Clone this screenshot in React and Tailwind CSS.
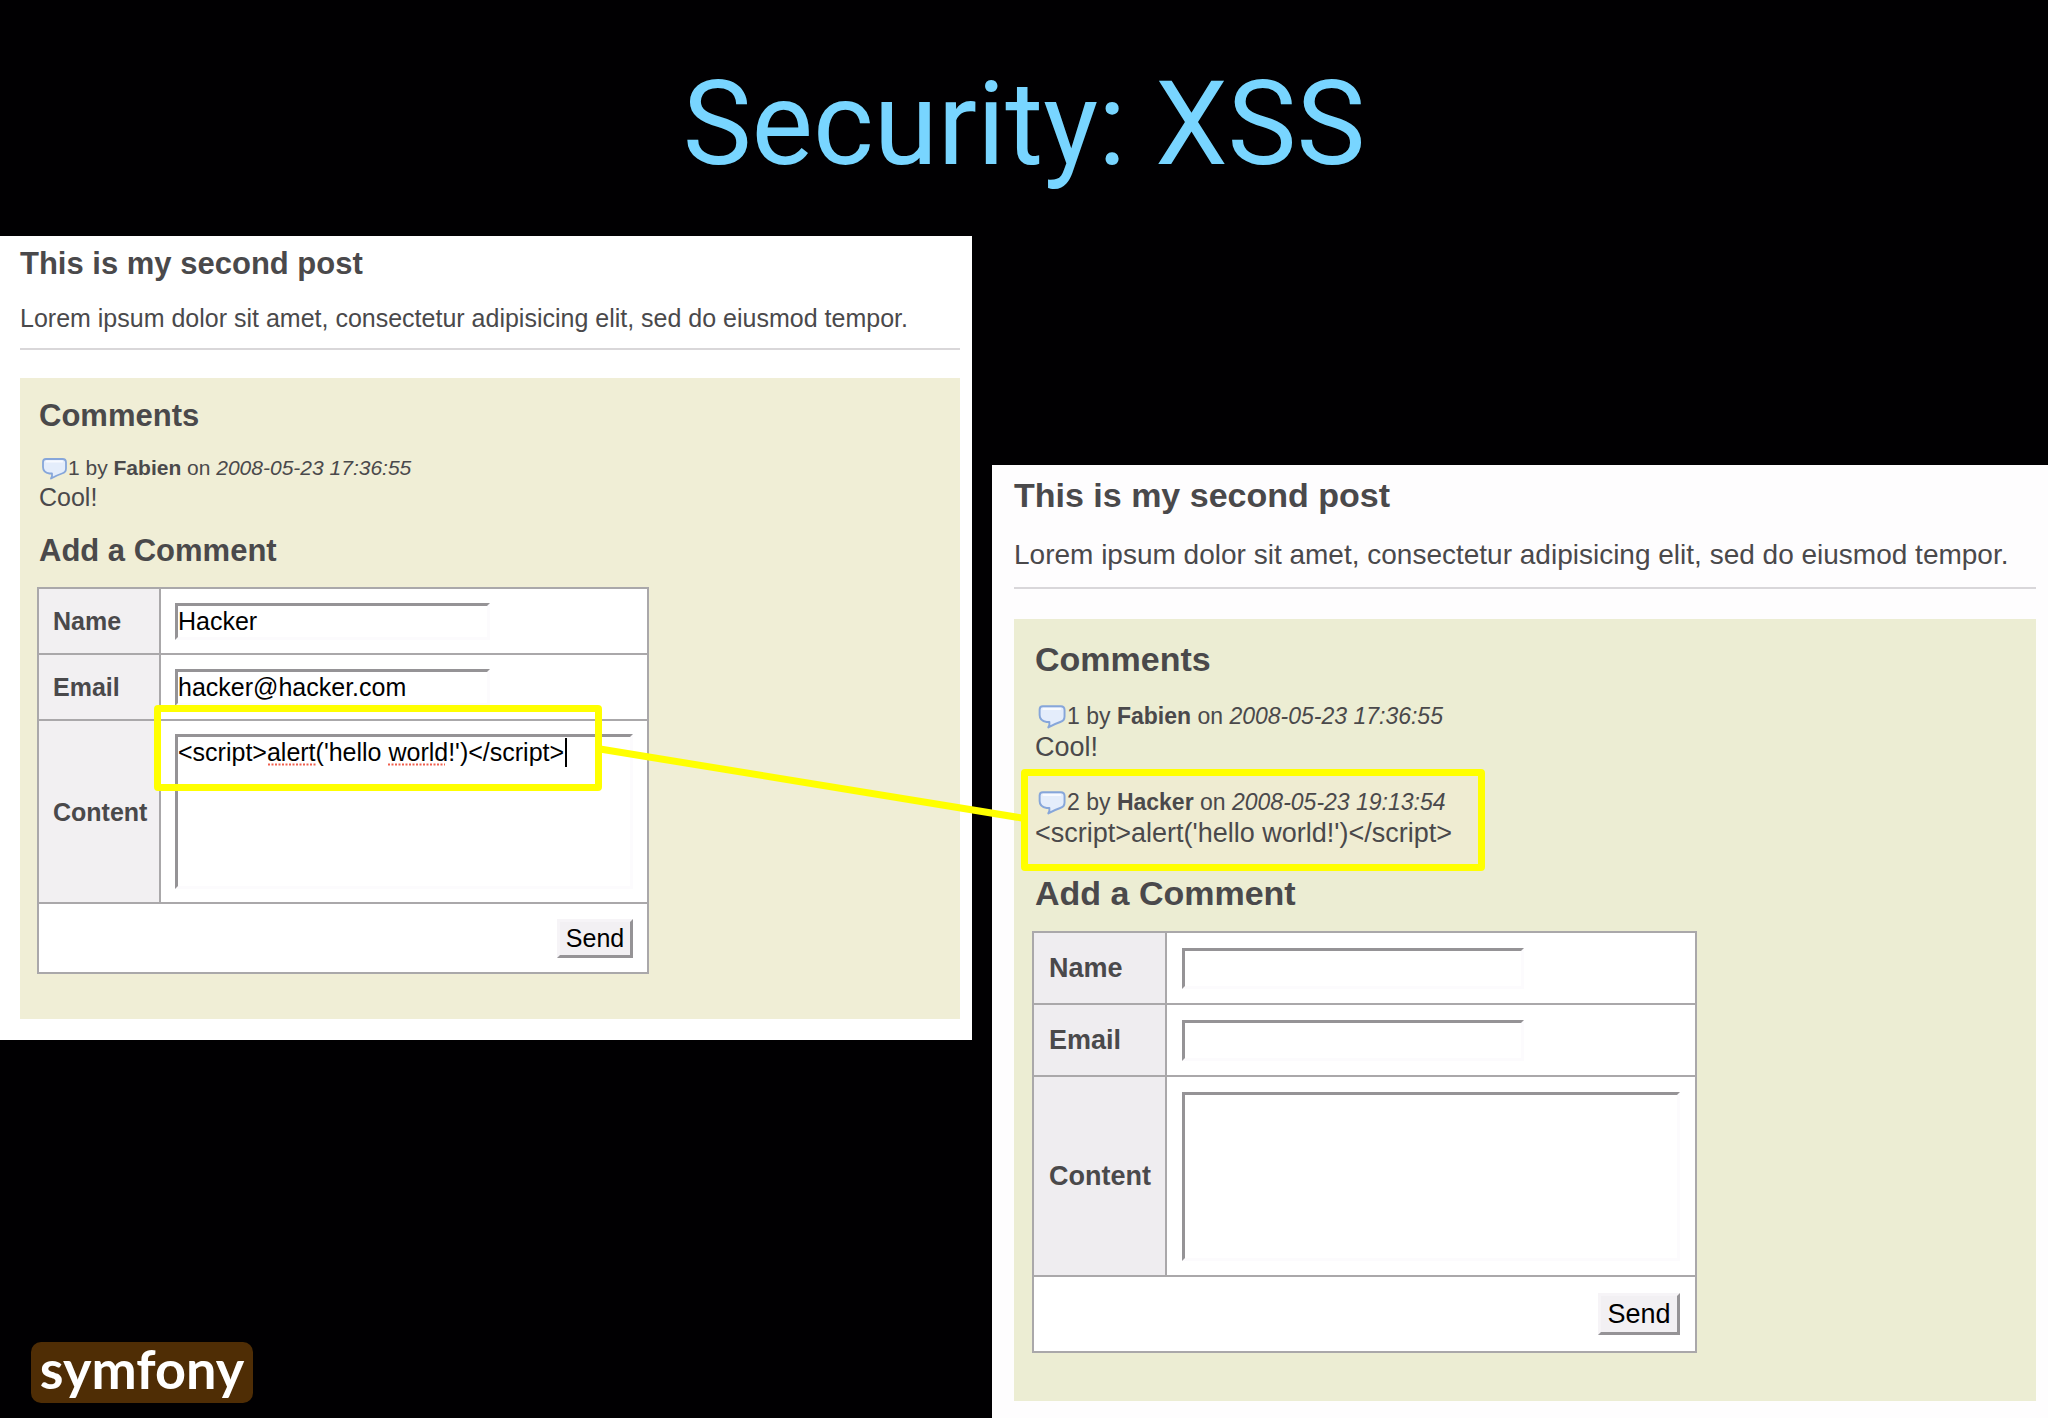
import { useId } from "react";

const SCRIPT = "<script>alert('hello world!')</script>";

const compact = {
  panel: "bg-white pl-5 pr-3 pt-2.5 pb-[21px]",
  heading: "text-[31px] leading-9 font-bold",
  intro: "mt-[21px] border-b-2 border-[#d9d7d9] pb-[15px] text-[25px] leading-[30px]",
  box: "mt-7 bg-[#f0eed6] pl-[19px] pr-4 pt-5 pb-[45px]",
  first: "mt-5",
  next: "mt-6",
  meta: "text-[21px] leading-7",
  icon: "h-6 w-[29px]",
  body: "text-[25px] leading-[30px]",
  add: "mt-[21px]",
  table: "-ml-0.5 mt-[18px] text-[25px] leading-[30px]",
  row: "h-[66px]",
  tallRow: "h-[183px]",
  lastRow: "h-[70px]",
  th: "w-[122px] bg-[#f2f0f2] pl-3.5",
  td: "w-[488px] px-3.5",
  input: "h-[37px] w-[315px]",
  area: "h-[155px] w-[458px]",
  button: "h-[39px] w-[76px]",
};

const large = {
  panel: "bg-[#fefdfe] pl-[22px] pr-3 pt-2.5 pb-4",
  heading: "text-[34px] leading-10 font-bold",
  intro: "mt-6 border-b-2 border-[#d9d7da] pb-4 text-[28px] leading-8",
  box: "mt-[30px] bg-[#ecedd3] pl-[21px] pr-4 pt-5 pb-12",
  first: "mt-[22px]",
  next: "mt-6",
  meta: "text-[23px] leading-[30px]",
  icon: "h-[26px] w-8",
  body: "text-[27px] leading-8",
  add: "mt-6",
  table: "-ml-[3px] mt-[18px] text-[27px] leading-[30px]",
  row: "h-[72px]",
  tallRow: "h-[200px]",
  lastRow: "h-[76px]",
  th: "w-[133px] bg-[#efedf0] pl-[15px]",
  td: "w-[530px] px-[15px]",
  input: "h-[41px] w-[342px]",
  area: "h-[169px] w-[498px]",
  button: "h-[42px] w-[82px]",
};

const field =
  "block rounded-none border-[3px] border-t-[#959396] border-l-[#959396] border-r-[#fcfbfd] border-b-[#fcfbfd] bg-white p-0 text-black outline-none";

function Bubble({ className }) {
  return (
    <svg className={className} viewBox="0 0 29 24" fill="none" aria-hidden="true">
      <path
        d="M7 3H23.5Q27 3 27 6.500V12.500Q27 16.500 23 17.500C20 18.500 16.500 20 12 22.500Q13.500 20 13 17.500H10.500Q4 16.500 4 11V6Q4 3 7 3Z"
        fill="#e4edfb"
        stroke="#86a6da"
        strokeWidth="1.800"
        strokeLinejoin="round"
      />
      <path d="M7.500 5.500H23" stroke="#f7faff" strokeWidth="2" strokeLinecap="round" />
    </svg>
  );
}

function Comment({ s, className, number, author, date, text, highlighted }) {
  return (
    <li className={`relative isolate ${className}`}>
      {highlighted && (
        <span className="absolute -left-3.5 -top-[18px] -z-10 h-[102px] w-[464px] rounded-sm border-[7px] border-[#ffff00] bg-[#efecd2]" />
      )}
      <p className={`flex items-center whitespace-pre ${s.meta}`}>
        <Bubble className={s.icon} />
        <span>
          {number} by <strong>{author}</strong> on <em>{date}</em>
        </span>
      </p>
      <p className={s.body}>{text}</p>
    </li>
  );
}

function TypingMarks() {
  return (
    <>
      <svg className="pointer-events-none absolute left-0 top-0 h-10 w-[458px]" fill="none" aria-hidden="true">
        <path d="M93 30.500H142M213 30.500H270" stroke="#f0604f" strokeWidth="2" strokeDasharray="2 1.500" />
        <path d="M391 4V33" stroke="#000" strokeWidth="2" />
      </svg>
      <span className="pointer-events-none absolute -left-[21px] -top-[29px] h-[86px] w-[448px] rounded-sm border-[7px] border-[#ffff00]" />
    </>
  );
}

function CommentForm({ s, values }) {
  const id = useId();
  const th = `border-2 border-[#aaa8aa] text-left align-middle font-bold ${s.th}`;
  const td = `border-2 border-[#aaa8aa] bg-white align-middle ${s.td}`;
  return (
    <form onSubmit={(e) => e.preventDefault()}>
      <table className={`border-collapse ${s.table}`}>
        <tbody>
          <tr className={s.row}>
            <th scope="row" className={th}>
              <label htmlFor={`${id}name`}>Name</label>
            </th>
            <td className={td}>
              <input id={`${id}name`} type="text" defaultValue={values.name} className={`${field} ${s.input}`} />
            </td>
          </tr>
          <tr className={s.row}>
            <th scope="row" className={th}>
              <label htmlFor={`${id}email`}>Email</label>
            </th>
            <td className={td}>
              <input id={`${id}email`} type="text" defaultValue={values.email} className={`${field} ${s.input}`} />
            </td>
          </tr>
          <tr className={s.tallRow}>
            <th scope="row" className={th}>
              <label htmlFor={`${id}content`}>Content</label>
            </th>
            <td className={td}>
              <div className="relative">
                <textarea
                  id={`${id}content`}
                  defaultValue={values.content}
                  spellCheck={false}
                  className={`resize-none overflow-hidden ${field} ${s.area}`}
                />
                {values.content && <TypingMarks />}
              </div>
            </td>
          </tr>
          <tr className={s.lastRow}>
            <td colSpan={2} className={td}>
              <button
                type="submit"
                className={`ml-auto flex items-center justify-center border-[3px] border-t-[#f6f4f7] border-l-[#f6f4f7] border-r-[#959396] border-b-[#959396] bg-[#f2f0f3] text-black ${s.button}`}
              >
                Send
              </button>
            </td>
          </tr>
        </tbody>
      </table>
    </form>
  );
}

function Post({ s, comments, values, className }) {
  return (
    <article className={`text-[#4a494b] ${s.panel} ${className}`}>
      <h2 className={s.heading}>This is my second post</h2>
      <p className={`whitespace-nowrap ${s.intro}`}>
        Lorem ipsum dolor sit amet, consectetur adipisicing elit, sed do eiusmod tempor.
      </p>
      <section className={s.box}>
        <h3 className={s.heading}>Comments</h3>
        <ul>
          {comments.map((c, i) => (
            <Comment key={c.number} s={s} className={i === 0 ? s.first : s.next} {...c} />
          ))}
        </ul>
        <h3 className={`${s.heading} ${s.add}`}>Add a Comment</h3>
        <CommentForm s={s} values={values} />
      </section>
    </article>
  );
}

const fabien = { number: 1, author: "Fabien", date: "2008-05-23 17:36:55", text: "Cool!" };
const hacker = { number: 2, author: "Hacker", date: "2008-05-23 19:13:54", text: SCRIPT, highlighted: true };

export default function App() {
  return (
    <main className="relative flex min-h-screen flex-col bg-[#010002] font-['Liberation_Sans',Arial,sans-serif]">
      <h1 className="flex h-[236px] items-center justify-center pt-3 font-['Roboto',sans-serif] text-[116px] leading-[140px] font-normal text-[#78d5ff]">
        Security: XSS
      </h1>
      <div className="grid grow grid-cols-[972fr_1056fr] gap-5">
        <div className="flex min-w-0 flex-col justify-between">
          <Post
            s={compact}
            className=""
            comments={[fabien]}
            values={{ name: "Hacker", email: "hacker@hacker.com", content: SCRIPT }}
          />
          <div className="mb-[15px] ml-[31px] flex h-[61px] w-[222px] items-center justify-center rounded-[10px] bg-[#4f2d05] pb-2 font-['Lato',sans-serif] text-[54px] leading-[54px] font-bold text-white">
            symfony
          </div>
        </div>
        <Post s={large} className="mt-[229px] min-w-0" comments={[fabien, hacker]} values={{}} />
      </div>
      <svg className="pointer-events-none absolute inset-0 h-full w-full" aria-hidden="true">
        <line x1="600" y1="749" x2="49.900%" y2="818" stroke="#ffff00" strokeWidth="7" />
      </svg>
    </main>
  );
}
